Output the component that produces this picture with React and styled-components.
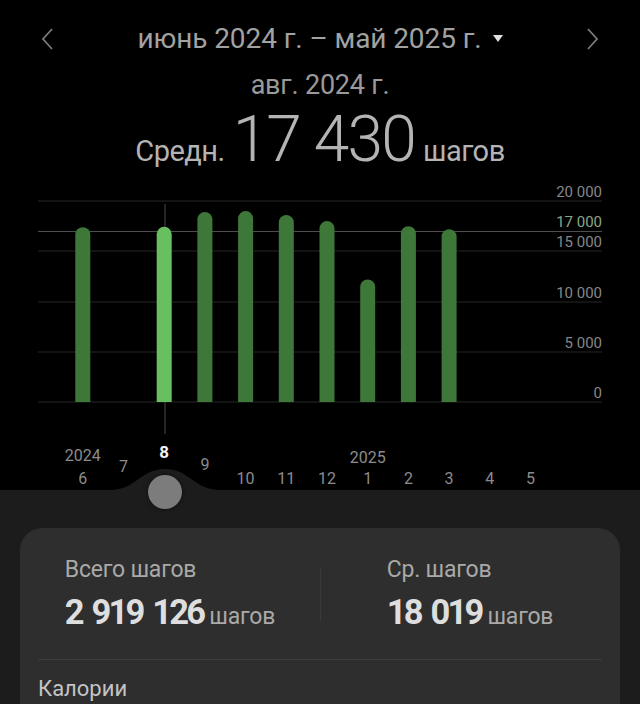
import React from 'react';
import styled, { createGlobalStyle } from 'styled-components';

const GlobalStyle = createGlobalStyle`
  html, body {
    margin: 0;
    padding: 0;
    background: #000;
  }
  body {
    font-family: Roboto, "Noto Sans", "DejaVu Sans", sans-serif;
    overflow: hidden;
  }
`;

const Screen = styled.div`
  width: 640px;
  height: 704px;
  overflow: hidden;
  background: #000;
  display: flex;
  flex-direction: column;
`;

const Header = styled.header`
  height: 180px;
  display: flex;
  flex-direction: column;
  align-items: center;
  flex-shrink: 0;
`;

const NavRow = styled.div`
  width: 100%;
  height: 40px;
  margin-top: 22px;
  padding: 0 40px;
  box-sizing: border-box;
  display: flex;
  align-items: center;
  justify-content: space-between;
`;

const RangeTitle = styled.div`
  display: flex;
  align-items: center;
  gap: 11px;
  font-size: 28px;
  color: #a2a2a2;
  letter-spacing: -0.1px;
`;

const Subtitle = styled.div`
  margin-top: 15px;
  font-size: 27px;
  line-height: 30px;
  color: #9a9a9a;
  letter-spacing: -0.2px;
`;

const AverageRow = styled.div`
  margin-top: 8px;
  display: flex;
  align-items: baseline;
  gap: 8px;
  color: #b4b4b4;
`;

const AverageUnit = styled.span`
  font-size: 29px;
  line-height: 64px;
  letter-spacing: -0.5px;
`;

const AverageValue = styled.span`
  font-size: 64px;
  line-height: 64px;
  font-weight: 300;
  letter-spacing: -1.8px;
`;

const Chart = styled.svg`
  display: block;
  flex-shrink: 0;
  font-family: Roboto, "Noto Sans", sans-serif;
`;

const SliderPanel = styled.div`
  position: relative;
  flex: 1;
  background: #1c1c1c;
  padding-top: 38px;
`;

const Bump = styled.svg`
  position: absolute;
  top: -22px;
  left: 0;
`;

const Knob = styled.div`
  position: absolute;
  top: -15px;
  left: 148px;
  width: 34px;
  height: 34px;
  border-radius: 50%;
  background: #7c7c7c;
  box-shadow: 0 0 4px rgba(0, 0, 0, 0.5);
`;

const Card = styled.section`
  margin: 0 20px;
  height: 200px;
  border-radius: 22px;
  background: #2e2e2e;
  padding-top: 28px;
  box-sizing: border-box;
`;

const StatsRow = styled.div`
  display: grid;
  grid-template-columns: 1fr 1fr;
  padding-bottom: 28px;
`;

const StatCell = styled.div`
  position: relative;
  display: flex;
  justify-content: center;

  &::before {
    content: '';
    display: ${p => (p.$divided ? 'block' : 'none')};
    position: absolute;
    left: 0;
    top: 12px;
    bottom: 10px;
    border-left: 1px solid #3a3a3a;
  }
`;

const StatBlock = styled.div`
  display: flex;
  flex-direction: column;
`;

const StatLabel = styled.div`
  font-size: 23px;
  line-height: 28px;
  color: #a9a9a9;
  letter-spacing: -0.2px;
`;

const StatValue = styled.div`
  display: flex;
  align-items: baseline;
  gap: 6px;
  margin-top: 9px;
  color: #dedede;
`;

const StatNumber = styled.span`
  font-size: 34.5px;
  line-height: 38px;
  font-weight: 700;
  letter-spacing: -2.8px;
  word-spacing: 4px;
`;

const StatUnit = styled.span`
  font-size: 23px;
  color: #a9a9a9;
  letter-spacing: -0.2px;
`;

const Divider = styled.hr`
  margin: 0 18px;
  border: none;
  border-top: 1px solid #3d3d3d;
`;

const SectionTitle = styled.div`
  padding: 16px 18px 0;
  font-size: 22px;
  color: #c4c4c4;
`;

const Chevron = ({ dir }) => (
  <svg width="14" height="24" viewBox="0 0 14 24">
    <polyline
      points={dir === 'left' ? '12,2 3,12 12,22' : '2,2 11,12 2,22'}
      fill="none"
      stroke="#7a7a7a"
      strokeWidth="1.8"
    />
  </svg>
);

const months = [
  { m: '6', v: 17400, y: 484, year: '2024' },
  { m: '7', v: 0, y: 472 },
  { m: '8', v: 17430, y: 458, active: true },
  { m: '9', v: 18900, y: 469.5 },
  { m: '10', v: 19000, y: 484 },
  { m: '11', v: 18600, y: 484 },
  { m: '12', v: 18000, y: 484 },
  { m: '1', v: 12200, y: 484, year: '2025' },
  { m: '2', v: 17500, y: 484 },
  { m: '3', v: 17200, y: 484 },
  { m: '4', v: 0, y: 484 },
  { m: '5', v: 0, y: 484 },
];

const ticks = [
  { label: '20 000', y: 201, ty: 197 },
  { label: '15 000', y: 251, ty: 247 },
  { label: '10 000', y: 302, ty: 298 },
  { label: '5 000', y: 352, ty: 348 },
  { label: '0', y: 402, ty: 398 },
];

const BASE = 402;
const scaleY = v => BASE - v * (201 / 20000);
const colX = i => 82.8 + i * 40.7;

function barPath(x, top) {
  const r = 7.5;
  return `M${x - r},${BASE} V${top + r} A${r},${r} 0 0 1 ${x + r},${top + r} V${BASE} Z`;
}

function StepsChart() {
  return (
    <Chart width="640" height="310" viewBox="0 180 640 310">
      {ticks.map(t => (
        <g key={t.label}>
          <line x1="38" x2="602" y1={t.y} y2={t.y} stroke="#262626" strokeWidth="1" />
          <text x="602" y={t.ty} textAnchor="end" fontSize="15" fill="#878787">
            {t.label}
          </text>
        </g>
      ))}
      <line x1="38" x2="602" y1="231.5" y2="231.5" stroke="#4e4e4e" strokeWidth="1.2" />
      <text x="602" y="227" textAnchor="end" fontSize="15" fill="#8aa886">
        17 000
      </text>
      <line x1="165" x2="165" y1="204" y2="434" stroke="#4a4a4a" strokeWidth="1" />
      {months.map((d, i) =>
        d.v ? (
          <path
            key={`b${i}`}
            d={barPath(colX(i), scaleY(d.v))}
            fill={d.active ? '#68bf5f' : '#3e7839'}
          />
        ) : null
      )}
      {months.map((d, i) => (
        <g key={`l${i}`}>
          {d.year && (
            <text x={colX(i)} y={i === 0 ? 461 : 462.5} textAnchor="middle" fontSize="16" fill="#8c8c8c">
              {d.year}
            </text>
          )}
          <text
            x={colX(i)}
            y={d.y}
            textAnchor="middle"
            fontSize={d.active ? 17 : 16}
            fontWeight={d.active ? 700 : 400}
            fill={d.active ? '#f2f2f2' : '#8c8c8c'}
          >
            {d.m}
          </text>
        </g>
      ))}
    </Chart>
  );
}

export default function App() {
  return (
    <>
      <GlobalStyle />
      <Screen>
        <Header>
          <NavRow>
            <Chevron dir="left" />
            <RangeTitle>
              июнь 2024 г. – май 2025 г.
              <svg width="10" height="8" viewBox="0 0 10 8">
                <polygon points="0,0 10,0 5,7" fill="#e0e0e0" />
              </svg>
            </RangeTitle>
            <Chevron dir="right" />
          </NavRow>
          <Subtitle>авг. 2024 г.</Subtitle>
          <AverageRow>
            <AverageUnit>Средн.</AverageUnit>
            <AverageValue>17 430</AverageValue>
            <AverageUnit>шагов</AverageUnit>
          </AverageRow>
        </Header>
        <StepsChart />
        <SliderPanel>
          <Bump width="640" height="22" viewBox="0 0 640 22">
            <path d="M110,22 C136,22 140,1 165,1 C190,1 194,22 220,22 Z" fill="#1c1c1c" />
          </Bump>
          <Knob />
          <Card>
            <StatsRow>
              <StatCell>
                <StatBlock>
                  <StatLabel>Всего шагов</StatLabel>
                  <StatValue>
                    <StatNumber>2 919 126</StatNumber>
                    <StatUnit>шагов</StatUnit>
                  </StatValue>
                </StatBlock>
              </StatCell>
              <StatCell $divided>
                <StatBlock>
                  <StatLabel>Ср. шагов</StatLabel>
                  <StatValue>
                    <StatNumber>18 019</StatNumber>
                    <StatUnit>шагов</StatUnit>
                  </StatValue>
                </StatBlock>
              </StatCell>
            </StatsRow>
            <Divider />
            <SectionTitle>Калории</SectionTitle>
          </Card>
        </SliderPanel>
      </Screen>
    </>
  );
}
